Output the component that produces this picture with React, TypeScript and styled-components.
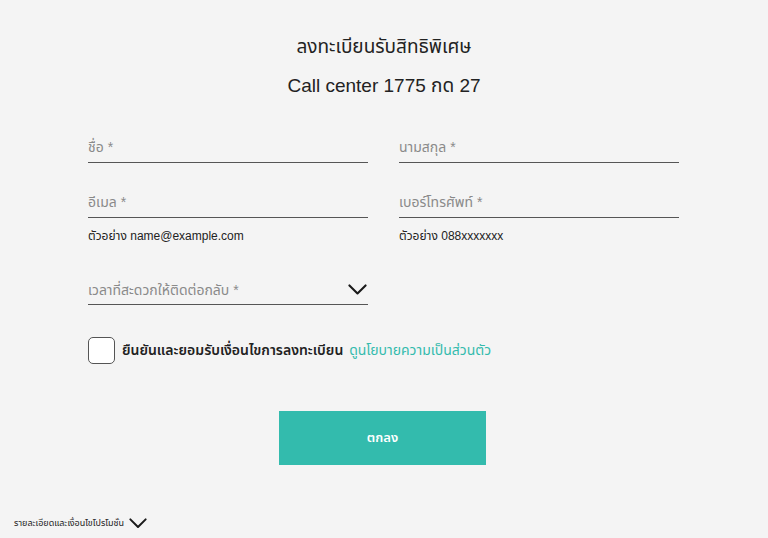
import React from 'react';
import styled, { createGlobalStyle } from 'styled-components';

const TEAL = '#33bbad';
const TEXT = '#222222';
const MUTED = '#8a8a8a';
const LINE = '#555555';

const GlobalStyle = createGlobalStyle`
  html, body {
    margin: 0;
    padding: 0;
    background: #f4f4f4;
  }
  body {
    font-family: 'Liberation Sans', 'Noto Sans Thai', 'Noto Sans', sans-serif;
    color: ${TEXT};
  }
`;

function Chevron({ size = 18 }: { size?: number }) {
  return (
    <svg width={size} height={size * 0.6} viewBox="0 0 20 12" fill="none">
      <path
        d="M1.5 1.5 L10 10 L18.5 1.5"
        stroke="#1a1a1a"
        strokeWidth="2.2"
        strokeLinecap="round"
        strokeLinejoin="round"
      />
    </svg>
  );
}

function Field({ label, hint }: { label: string; hint?: string }) {
  return (
    <FieldWrap>
      <FieldLine>
        <Label>{label}</Label>
      </FieldLine>
      {hint && <Hint>{hint}</Hint>}
    </FieldWrap>
  );
}

export default function App() {
  return (
    <>
      <GlobalStyle />
      <Page>
        <Header>
          <Title>ลงทะเบียนรับสิทธิพิเศษ</Title>
          <SubTitle>Call center 1775 กด 27</SubTitle>
        </Header>
        <Form>
          <Grid>
            <Field label="ชื่อ *" />
            <Field label="นามสกุล *" />
            <Field label="อีเมล *" hint="ตัวอย่าง name@example.com" />
            <Field label="เบอร์โทรศัพท์ *" hint="ตัวอย่าง 088xxxxxxx" />
          </Grid>
          <SelectLine>
            <Label>เวลาที่สะดวกให้ติดต่อกลับ *</Label>
            <Chevron size={19} />
          </SelectLine>
          <Consent>
            <Box />
            <ConsentText>
              ยืนยันและยอมรับเงื่อนไขการลงทะเบียน{' '}
              <PolicyLink>ดูนโยบายความเป็นส่วนตัว</PolicyLink>
            </ConsentText>
          </Consent>
          <SubmitRow>
            <Submit>ตกลง</Submit>
          </SubmitRow>
        </Form>
        <Footer>
          <FooterText>รายละเอียดและเงื่อนไขโปรโมชั่น</FooterText>
          <Chevron size={18} />
        </Footer>
      </Page>
    </>
  );
}

const Page = styled.div`
  width: 768px;
  height: 538px;
  display: flex;
  flex-direction: column;
  align-items: center;
  overflow: hidden;
`;

const Header = styled.div`
  display: flex;
  flex-direction: column;
  align-items: center;
  padding-top: 33px;
`;

const Title = styled.h1`
  margin: 0;
  font-size: 19px;
  font-weight: 400;
  line-height: 28px;
  color: ${TEXT};
`;

const SubTitle = styled.h2`
  margin: 11px 0 0;
  font-size: 19px;
  font-weight: 400;
  line-height: 28px;
  color: ${TEXT};
`;

const Form = styled.div`
  width: 592px;
  margin-top: 33px;
  display: flex;
  flex-direction: column;
`;

const Grid = styled.div`
  display: grid;
  grid-template-columns: 280px 280px;
  column-gap: 31px;
  row-gap: 25px;
  align-items: start;
`;

const FieldWrap = styled.div`
  display: flex;
  flex-direction: column;
`;

const FieldLine = styled.div`
  height: 29px;
  display: flex;
  align-items: center;
  border-bottom: 1px solid ${LINE};
`;

const Label = styled.span`
  font-size: 14px;
  color: ${MUTED};
`;

const Hint = styled.span`
  margin-top: 9px;
  font-size: 12px;
  color: ${TEXT};
`;

const SelectLine = styled.div`
  width: 280px;
  height: 29px;
  margin-top: 31px;
  display: flex;
  align-items: center;
  justify-content: space-between;
  padding-right: 1px;
  box-sizing: border-box;
  border-bottom: 1px solid ${LINE};
`;

const Consent = styled.label`
  margin-top: 32px;
  display: flex;
  align-items: center;
  gap: 7px;
`;

const Box = styled.span`
  width: 27px;
  height: 27px;
  border: 1.5px solid #555;
  border-radius: 5px;
  background: #fff;
  box-sizing: border-box;
`;

const ConsentText = styled.span`
  font-size: 14px;
  font-weight: 600;
  color: ${TEXT};
`;

const PolicyLink = styled.a`
  color: ${TEAL};
  font-weight: 400;
  margin-left: 2px;
`;

const SubmitRow = styled.div`
  margin-top: 47px;
  padding-right: 3px;
  display: flex;
  justify-content: center;
`;

const Submit = styled.button`
  width: 207px;
  height: 54px;
  border: none;
  background: ${TEAL};
  color: #fff;
  font-family: inherit;
  font-size: 13px;
  font-weight: 600;
`;

const Footer = styled.div`
  align-self: flex-start;
  margin-top: auto;
  margin-bottom: 8px;
  margin-left: 14px;
  display: flex;
  align-items: center;
  gap: 5px;
`;

const FooterText = styled.span`
  font-size: 9px;
  color: ${TEXT};
`;
